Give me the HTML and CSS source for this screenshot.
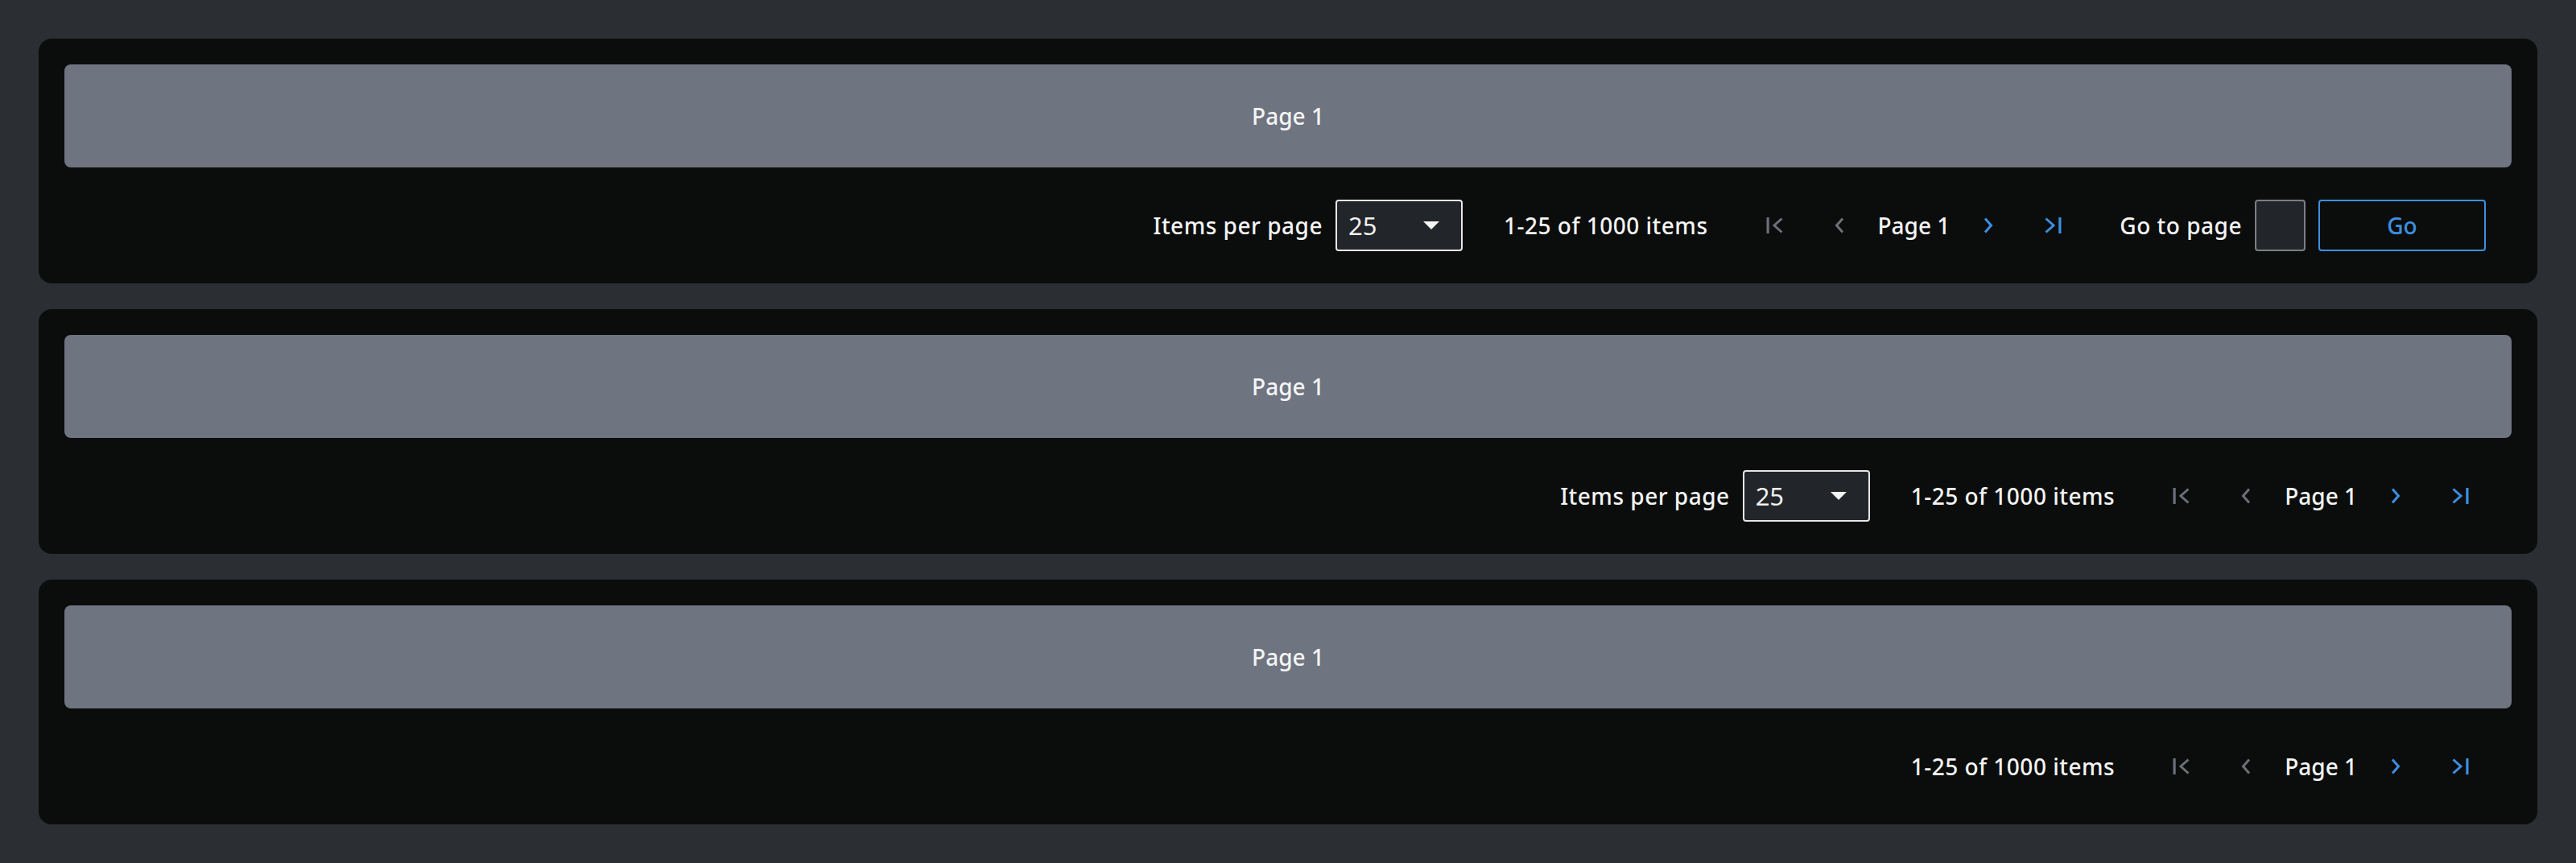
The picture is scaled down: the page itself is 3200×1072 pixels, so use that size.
FILE: index.html
```html
<!DOCTYPE html>
<html lang="en">
<head>
<meta charset="utf-8">
<title>Pagination</title>
<link rel="stylesheet" href="styles.css">
</head>
<body>
<main class="page">
  <section class="card">
    <div class="content">Page 1</div>
    <nav class="pagination">
      <div class="group">
        <span class="label">Items per page</span>
        <div class="select"><span class="select-value">25</span><span class="caret"></span></div>
      </div>
      <span class="label range">1-25 of 1000 items</span>
      <div class="nav">
        <button class="icon-btn disabled" aria-label="First page"><svg width="24" height="24" viewBox="0 0 24 24"><rect x="1.5" y="2" width="3.2" height="20" fill="currentColor"/><path d="M20.5 3.5 L11 12 L20.5 20.5" fill="none" stroke="currentColor" stroke-width="3"/></svg></button>
        <button class="icon-btn disabled" aria-label="Previous page"><svg width="24" height="24" viewBox="0 0 24 24"><path d="M16 3.5 L8.5 12 L16 20.5" fill="none" stroke="currentColor" stroke-width="3"/></svg></button>
        <span class="label current">Page 1</span>
        <button class="icon-btn" aria-label="Next page"><svg width="24" height="24" viewBox="0 0 24 24"><path d="M8 3.5 L15.5 12 L8 20.5" fill="none" stroke="currentColor" stroke-width="3"/></svg></button>
        <button class="icon-btn" aria-label="Last page"><svg width="24" height="24" viewBox="0 0 24 24"><path d="M3.5 3.5 L13 12 L3.5 20.5" fill="none" stroke="currentColor" stroke-width="3"/><rect x="19.3" y="2" width="3.2" height="20" fill="currentColor"/></svg></button>
      </div>
      <div class="group">
        <span class="label">Go to page</span>
        <span class="goto-input"></span>
        <button class="go-btn">Go</button>
      </div>
    </nav>
  </section>

  <section class="card">
    <div class="content">Page 1</div>
    <nav class="pagination">
      <div class="group">
        <span class="label">Items per page</span>
        <div class="select"><span class="select-value">25</span><span class="caret"></span></div>
      </div>
      <span class="label range">1-25 of 1000 items</span>
      <div class="nav">
        <button class="icon-btn disabled" aria-label="First page"><svg width="24" height="24" viewBox="0 0 24 24"><rect x="1.5" y="2" width="3.2" height="20" fill="currentColor"/><path d="M20.5 3.5 L11 12 L20.5 20.5" fill="none" stroke="currentColor" stroke-width="3"/></svg></button>
        <button class="icon-btn disabled" aria-label="Previous page"><svg width="24" height="24" viewBox="0 0 24 24"><path d="M16 3.5 L8.5 12 L16 20.5" fill="none" stroke="currentColor" stroke-width="3"/></svg></button>
        <span class="label current">Page 1</span>
        <button class="icon-btn" aria-label="Next page"><svg width="24" height="24" viewBox="0 0 24 24"><path d="M8 3.5 L15.5 12 L8 20.5" fill="none" stroke="currentColor" stroke-width="3"/></svg></button>
        <button class="icon-btn" aria-label="Last page"><svg width="24" height="24" viewBox="0 0 24 24"><path d="M3.5 3.5 L13 12 L3.5 20.5" fill="none" stroke="currentColor" stroke-width="3"/><rect x="19.3" y="2" width="3.2" height="20" fill="currentColor"/></svg></button>
      </div>
    </nav>
  </section>

  <section class="card">
    <div class="content">Page 1</div>
    <nav class="pagination">
      <span class="label range">1-25 of 1000 items</span>
      <div class="nav">
        <button class="icon-btn disabled" aria-label="First page"><svg width="24" height="24" viewBox="0 0 24 24"><rect x="1.5" y="2" width="3.2" height="20" fill="currentColor"/><path d="M20.5 3.5 L11 12 L20.5 20.5" fill="none" stroke="currentColor" stroke-width="3"/></svg></button>
        <button class="icon-btn disabled" aria-label="Previous page"><svg width="24" height="24" viewBox="0 0 24 24"><path d="M16 3.5 L8.5 12 L16 20.5" fill="none" stroke="currentColor" stroke-width="3"/></svg></button>
        <span class="label current">Page 1</span>
        <button class="icon-btn" aria-label="Next page"><svg width="24" height="24" viewBox="0 0 24 24"><path d="M8 3.5 L15.5 12 L8 20.5" fill="none" stroke="currentColor" stroke-width="3"/></svg></button>
        <button class="icon-btn" aria-label="Last page"><svg width="24" height="24" viewBox="0 0 24 24"><path d="M3.5 3.5 L13 12 L3.5 20.5" fill="none" stroke="currentColor" stroke-width="3"/><rect x="19.3" y="2" width="3.2" height="20" fill="currentColor"/></svg></button>
      </div>
    </nav>
  </section>
</main>
</body>
</html>
```

FILE: styles.css
```css
* {
  box-sizing: border-box;
}

html, body {
  margin: 0;
  padding: 0;
  background: #2b2e33;
}

body {
  font-family: "Noto Sans", "Open Sans", sans-serif;
  color: #f2f2f2;
}

.page {
  display: flex;
  flex-direction: column;
  gap: 32px;
  padding: 48px;
}

.card {
  background: #0b0d0c;
  border-radius: 16px;
  padding: 32px;
}

.content {
  height: 128px;
  background: #6e7480;
  border-radius: 8px;
  display: flex;
  align-items: center;
  justify-content: center;
  font-size: 28px;
  font-weight: 500;
  color: #f4f4f4;
}

.pagination {
  margin-top: 32px;
  height: 80px;
  padding: 8px 32px;
  display: flex;
  justify-content: flex-end;
  align-items: center;
  gap: 51px;
}

.group {
  display: flex;
  align-items: center;
  gap: 16px;
}

.nav {
  display: flex;
  align-items: center;
  gap: 16px;
}

.label {
  font-size: 28px;
  font-weight: 500;
  letter-spacing: 0.5px;
  line-height: 64px;
  color: #f4f4f4;
  white-space: nowrap;
}

.label.current {
  letter-spacing: 0;
}

.select {
  width: 158px;
  height: 64px;
  border: 2px solid #e6e6e6;
  border-radius: 4px;
  background: #222529;
  display: flex;
  align-items: center;
  justify-content: space-between;
  padding: 0 27px 0 14px;
}

.select-value {
  font-size: 31px;
  color: #f0f0f0;
  font-weight: 400;
}

.caret {
  width: 0;
  height: 0;
  border-left: 10px solid transparent;
  border-right: 10px solid transparent;
  border-top: 10px solid #f4f4f4;
}

.icon-btn {
  width: 64px;
  height: 64px;
  padding: 0;
  border: 0;
  background: transparent;
  color: #3d8fe2;
  display: flex;
  align-items: center;
  justify-content: center;
}

.icon-btn.disabled {
  color: #6b7079;
}

.icon-btn svg {
  display: block;
}

.goto-input {
  width: 63px;
  height: 64px;
  background: #222529;
  border: 2px solid #7b7e83;
  border-radius: 4px;
}

.go-btn {
  width: 208px;
  height: 64px;
  background: transparent;
  border: 2px solid #3d8fe2;
  border-radius: 4px;
  color: #3d8fe2;
  font-family: "Noto Sans", "Open Sans", sans-serif;
  font-size: 28px;
  font-weight: 500;
  padding: 0;
}
```
